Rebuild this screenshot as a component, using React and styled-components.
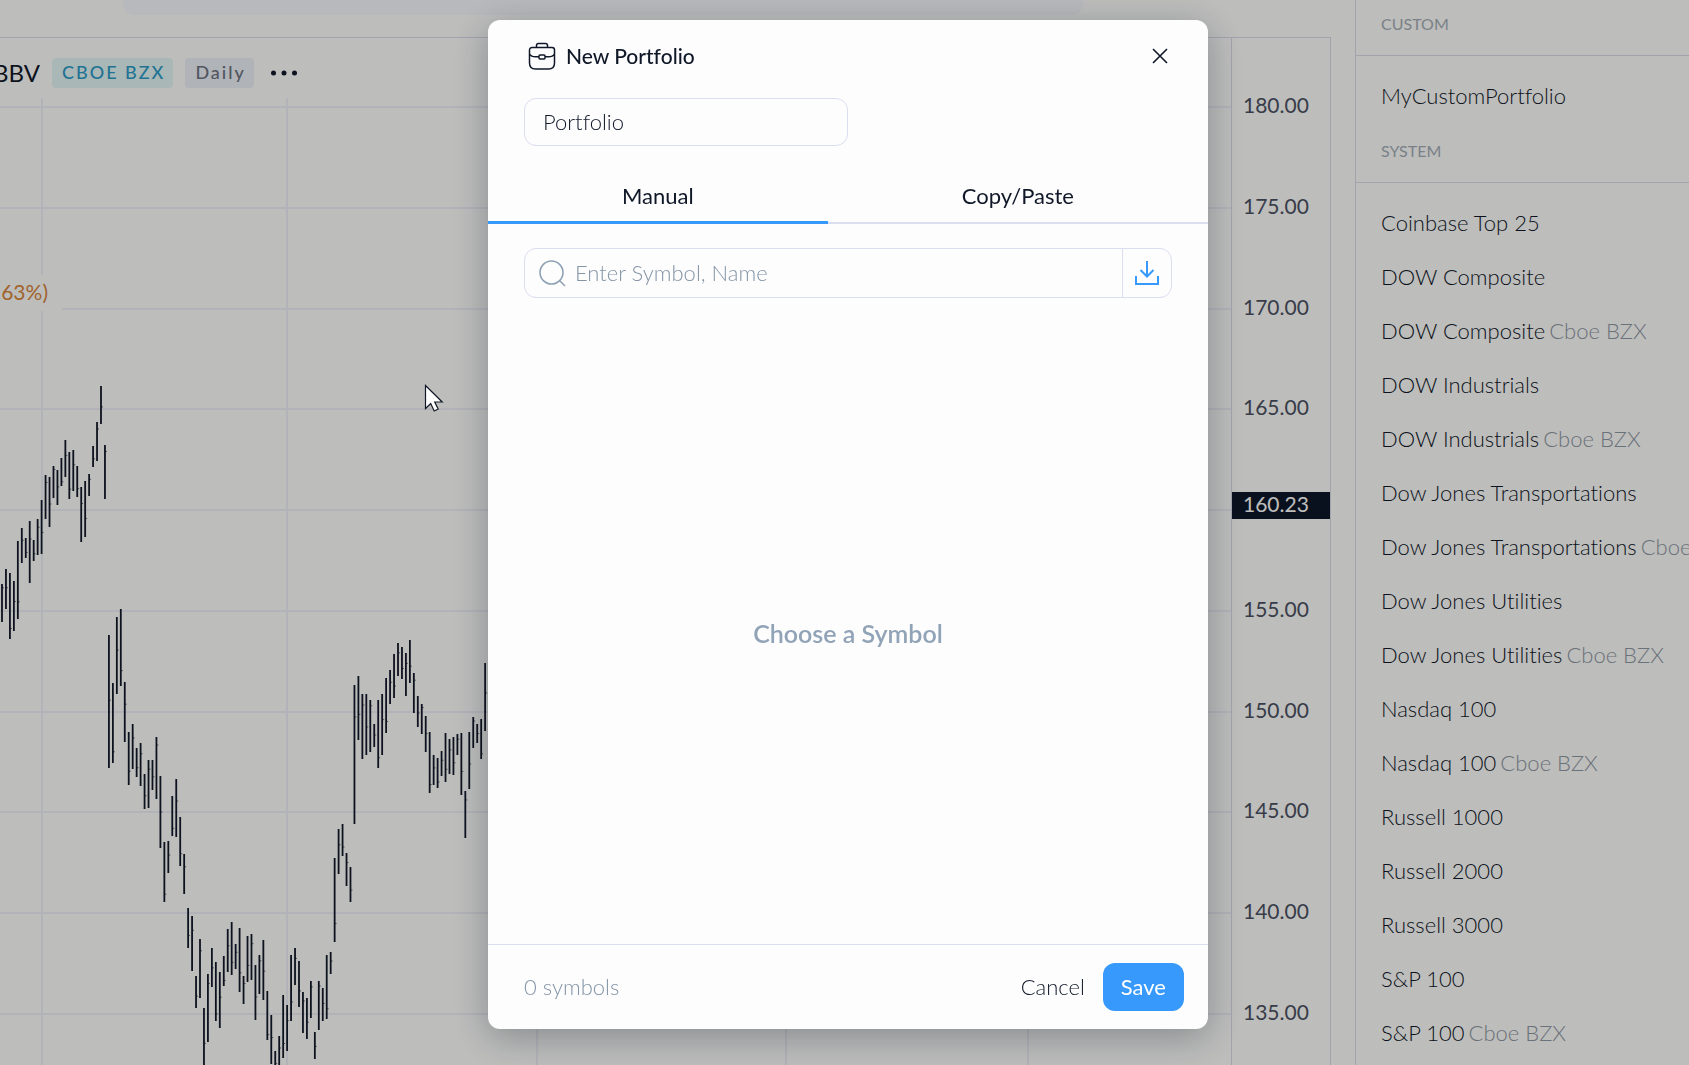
import React from 'react'
import styled, { createGlobalStyle, css } from 'styled-components'

const color = {
  ink: '#101828',
  muted: '#a3acb5',
  border: '#dbdeee',
  pageBorder: '#dadae9',
  accent: '#3699fb',
  page: '#fdfdfb',
}

const GlobalStyle = createGlobalStyle`
  *, *::before, *::after {
    box-sizing: border-box;
  }

  body {
    margin: 0;
    background: ${color.page};
    color: ${color.ink};
    font-family: Lato, 'Open Sans', sans-serif;
    font-size: 21px;
    font-weight: 400;
    font-variant-ligatures: none;
    line-height: 28px;
  }

  button, input {
    font: inherit;
    font-variant-ligatures: none;
    color: inherit;
  }

  h2, h3, p, ul {
    margin: 0;
    padding: 0;
    font: inherit;
    font-variant-ligatures: none;
  }
`

/* ---------- page behind the dialog ---------- */

const Page = styled.div`
  display: flex;
  gap: 24px;
  height: 100vh;
  overflow: hidden;
`

const Workspace = styled.main`
  display: flex;
  flex: 1;
  flex-direction: column;
  min-width: 0;
`

const TopBar = styled.header`
  display: flex;
  height: 37px;
  padding: 0 248px 22px 123px;
`

const TopSearch = styled.div`
  flex: 1;
  border-radius: 0 0 12px 12px;
  background: #f5f7fb;
`

const ChartPanel = styled.section`
  display: flex;
  flex: 1;
  min-height: 0;
  border-top: 1px solid ${color.pageBorder};
  border-right: 1px solid ${color.pageBorder};
`

const Plot = styled.div`
  display: grid;
  flex: 1;
  min-width: 0;
  overflow: hidden;

  > * {
    grid-area: 1 / 1;
  }
`

const PlotSvg = styled.svg`
  display: block;
  width: 100%;
  height: 100%;
`

const AxisSvg = styled.svg`
  display: block;
  flex: none;
  width: 99px;
  height: 100%;
  border-left: 1px solid ${color.pageBorder};
  fill: #4b5162;
`

const Legend = styled.div`
  display: flex;
  flex-direction: column;
  align-items: flex-start;
  gap: 177px;
  z-index: 1;
`

const LegendRow = styled.div`
  display: flex;
  align-items: center;
  gap: 12px;
  width: 100%;
  height: 60px;
  padding-top: 10px;
`

const Ticker = styled.span`
  display: flex;
  justify-content: flex-end;
  width: 40px;
  overflow: hidden;
  font-size: 24px;
`

const Tag = styled.button`
  height: 30px;
  padding: 0 8px 1px 10px;
  border: 0;
  border-radius: 4px;
  font-size: 18px;
  font-weight: 500;
  letter-spacing: 2px;
  line-height: 29px;
  white-space: nowrap;
  ${(props) =>
    props.$exchange
      ? css`
          background: #e2f5f3;
          color: #2d9ac6;
        `
      : css`
          background: #ebeff5;
          color: #6b7280;
        `}
`

const MoreButton = styled.button`
  display: flex;
  padding: 0 4px;
  border: 0;
  background: none;
`

const Change = styled.p`
  display: flex;
  justify-content: flex-end;
  width: 62px;
  height: 36px;
  padding-right: 14px;
  overflow: hidden;
  background: ${color.page};
  color: #d5853a;
  line-height: 34px;
`

const Sidebar = styled.aside`
  flex: none;
  width: 334px;
  overflow: hidden;
  border-left: 1px solid ${color.pageBorder};
`

const GroupTitle = styled.h3`
  display: flex;
  align-items: flex-end;
  height: ${(props) => (props.$first ? 56 : 60)}px;
  padding: 0 25px 21px;
  border-bottom: 1px solid ${color.pageBorder};
  color: ${color.muted};
  font-size: 16px;
  line-height: 20px;
  text-transform: uppercase;
`

const GroupList = styled.ul`
  padding-top: 13px;
  list-style: none;
`

const PortfolioRow = styled.li`
  display: flex;
  align-items: center;
  gap: 4px;
  height: 54px;
  padding: 0 0 1px 25px;
  font-size: 22px;
  font-weight: 300;
  white-space: nowrap;

  a {
    color: inherit;
    text-decoration: none;
  }
`

const Venue = styled.span`
  color: #8d97a2;
`

/* ---------- dialog ---------- */

const Backdrop = styled.div`
  position: fixed;
  inset: 0;
  z-index: 2;
  display: flex;
  justify-content: center;
  padding: 20px 8px 36px 15px;
  background: rgba(0, 0, 0, 0.25);
`

const Dialog = styled.form`
  display: flex;
  flex-direction: column;
  width: 720px;
  max-width: 100%;
  border-radius: 12px;
  background: #fdfdfe;
  box-shadow: 0 8px 36px rgba(16, 24, 40, 0.32);
`

const DialogHeader = styled.header`
  display: flex;
  align-items: center;
  gap: 10px;
  height: 72px;
  padding: 0 40px;
`

const Title = styled.h2`
  flex: 1;
  font-size: 21px;
  font-weight: 500;
`

const IconButton = styled.button`
  display: flex;
  align-items: center;
  justify-content: center;
  padding: 0;
  border: 0;
  background: none;
  cursor: pointer;
`

const NameRow = styled.div`
  padding: 6px 36px 22px;
`

const NameInput = styled.input`
  width: 324px;
  max-width: 100%;
  height: 48px;
  padding: 0 18px 2px;
  border: 1px solid ${color.border};
  border-radius: 12px;
  background: none;
  font-size: 22px;
  font-weight: 300;
`

const Tabs = styled.div`
  display: flex;
  height: 56px;
`

const Tab = styled.button`
  flex: 1 1 auto;
  padding: 0;
  border: 0;
  background: none;
  box-shadow: inset 0 ${(props) => (props.$active ? -3 : -2)}px
    ${(props) => (props.$active ? color.accent : color.border)};
  font-size: 22px;
  cursor: pointer;
`

const SearchBox = styled.div`
  display: flex;
  align-items: stretch;
  height: 50px;
  margin: 24px 36px 0;
  border: 1px solid ${color.border};
  border-radius: 12px;
`

const SearchLabel = styled.label`
  display: flex;
  flex: 1;
  align-items: center;
  gap: 9px;
  padding-left: 14px;
`

const SearchInput = styled.input`
  flex: 1;
  min-width: 0;
  padding: 0 0 1px;
  border: 0;
  outline: 0;
  background: none;
  font-size: 22px;
  font-weight: 300;

  &::placeholder {
    color: #8495a6;
    opacity: 1;
  }
`

const ImportButton = styled(IconButton)`
  width: 49px;
  border-left: 1px solid ${color.border};
`

const EmptyState = styled.p`
  display: flex;
  flex: 1;
  align-items: center;
  justify-content: center;
  padding-top: 24px;
  color: #91a3b6;
  font-size: 25px;
  font-weight: 600;
`

const DialogFooter = styled.footer`
  display: flex;
  align-items: center;
  height: 85px;
  padding: 0 24px 0 36px;
  border-top: 1px solid ${color.border};
`

const Count = styled.span`
  flex: 1;
  color: #8495a6;
  font-size: 22px;
  font-weight: 300;
`

const Button = styled.button`
  height: 48px;
  padding: 0 18px 1px;
  border: 0;
  border-radius: 12px;
  background: ${(props) => (props.$primary ? color.accent : 'transparent')};
  color: ${(props) => (props.$primary ? '#fff' : color.ink)};
  font-size: 22px;
  font-weight: ${(props) => (props.$primary ? 400 : 300)};
  cursor: pointer;
`

const Pointer = styled.svg`
  position: fixed;
  top: 384px;
  left: 424px;
  z-index: 3;
`

/* ---------- data ---------- */

// [top, bottom] of each daily bar, left to right
const bars = [
  [584, 622], [569, 609], [573, 639], [581, 631], [541, 619], [528, 563],
  [538, 558], [521, 583], [540, 561], [519, 555], [500, 554], [475, 519],
  [477, 527], [466, 498], [470, 505], [458, 486], [440, 477], [452, 499],
  [450, 491], [466, 497], [487, 542], [481, 537], [474, 496], [446, 467],
  [422, 461], [386, 424], [445, 499], [635, 768], [683, 763], [617, 694],
  [609, 686], [682, 742], [732, 785], [724, 769], [748, 777], [743, 786],
  [774, 809], [760, 808], [760, 790], [737, 799], [776, 848], [842, 902],
  [841, 873], [796, 836], [779, 837], [817, 866], [854, 894], [908, 948],
  [916, 971], [976, 1008], [939, 998], [1008, 1070], [974, 1042], [948, 987],
  [962, 1021], [972, 1028], [956, 986], [929, 972], [922, 975], [944, 969],
  [928, 992], [976, 1004], [936, 982], [934, 980], [965, 1020], [955, 994],
  [940, 1000], [991, 1040], [1015, 1064], [1051, 1066], [1036, 1066],
  [995, 1058], [1005, 1051], [955, 1021], [948, 985], [961, 1007],
  [992, 1033], [998, 1039], [981, 1018], [1032, 1059], [981, 1030],
  [988, 1021], [955, 1019], [952, 974], [858, 942], [829, 874], [824, 856],
  [853, 886], [867, 902], [685, 824], [676, 740], [694, 759], [694, 755],
  [700, 752], [724, 747], [700, 768], [694, 755], [678, 733], [670, 704],
  [654, 698], [643, 676], [647, 679], [653, 696], [640, 683], [673, 713],
  [696, 727], [704, 734], [716, 752], [732, 793], [755, 785], [758, 788],
  [751, 776], [733, 782], [739, 774], [737, 775], [734, 755], [733, 795],
  [791, 838], [732, 789], [717, 748], [724, 743], [719, 759], [663, 731],
]

const BAR_STEP = 3.96
const CHART_TOP = 38
const prices = [180, 175, 170, 165, 160, 155, 150, 145, 140, 135]
const priceY = (price) => Math.round(107 + (180 - price) * 20.15) - CHART_TOP
const dateLines = [42, 287, 537, 786, 1028]
const lastPrice = 160.23

const custom = [{ name: 'MyCustomPortfolio' }]

const system = [
  { name: 'Coinbase Top 25' },
  { name: 'DOW Composite' },
  { name: 'DOW Composite', venue: 'Cboe BZX' },
  { name: 'DOW Industrials' },
  { name: 'DOW Industrials', venue: 'Cboe BZX' },
  { name: 'Dow Jones Transportations' },
  { name: 'Dow Jones Transportations', venue: 'Cboe BZX' },
  { name: 'Dow Jones Utilities' },
  { name: 'Dow Jones Utilities', venue: 'Cboe BZX' },
  { name: 'Nasdaq 100' },
  { name: 'Nasdaq 100', venue: 'Cboe BZX' },
  { name: 'Russell 1000' },
  { name: 'Russell 2000' },
  { name: 'Russell 3000' },
  { name: 'S&P 100' },
  { name: 'S&P 100', venue: 'Cboe BZX' },
]

/* ---------- icons ---------- */

const BriefcaseIcon = () => (
  <svg width="28" height="28" viewBox="0 0 28 28" fill="none" stroke={color.ink} strokeWidth="1.5">
    <path d="M8.500 5.500V3.500a2 2 0 0 1 2-2h7a2 2 0 0 1 2 2v2" />
    <path d="M4 5.500h20a2.500 2.500 0 0 1 2.500 2.500V21c0 4-2 6-6 6h-13c-4 0-6-2-6-6V8A2.500 2.500 0 0 1 4 5.500z" />
    <path d="M1.500 12c1 1.800 3 2.800 6 2.800h3.500M26.500 12c-1 1.800-3 2.800-6 2.800H17" />
    <rect x="11" y="13" width="6" height="4" rx="1" />
  </svg>
)

const CloseIcon = () => (
  <svg width="16" height="16" viewBox="0 0 16 16" fill="none" stroke={color.ink} strokeWidth="1.6">
    <path d="M1 1l14 14M15 1L1 15" />
  </svg>
)

const SearchIcon = () => (
  <svg width="27" height="27" viewBox="0 0 27 27" fill="none" stroke="#8fa2b5" strokeWidth="1.6">
    <circle cx="12.500" cy="12.500" r="11.500" />
    <path d="M20.500 20.500l5.500 5.500" />
  </svg>
)

const DownloadIcon = () => (
  <svg width="26" height="26" viewBox="0 0 26 26" fill="none" stroke={color.accent} strokeWidth="2">
    <path d="M13 1v15M6.500 10l6.500 6.500 6.500-6.500M2 16v8h22v-8" />
  </svg>
)

/* ---------- parts ---------- */

const PriceChart = () => (
  <PlotSvg role="img" aria-label="Daily price chart">
    <g stroke="#eeeff6" strokeWidth="2">
      {prices.map((price) => (
        <line key={price} x1="0" x2="100%" y1={priceY(price)} y2={priceY(price)} />
      ))}
      {dateLines.map((x) => (
        <line key={x} x1={x} x2={x} y1="60" y2="100%" />
      ))}
    </g>
    {bars.map(([top, bottom], i) => {
      const x = 2 + i * BAR_STEP
      const close = top + (bottom - top) * (((i * 37) % 80) / 100 + 0.1)
      return (
        <g key={i} stroke="#101828" transform={`translate(0 ${-CHART_TOP})`}>
          <line x1={x} x2={x} y1={top} y2={bottom} strokeWidth="1.800" />
          <line x1={x} x2={x + 2} y1={close} y2={close} strokeWidth="1" opacity="0.6" />
        </g>
      )
    })}
  </PlotSvg>
)

const PriceAxis = () => (
  <AxisSvg role="img" aria-label="Price axis">
    {prices
      .filter((price) => price !== 160)
      .map((price) => (
        <text key={price} x="11" y={priceY(price) + 6}>
          {price.toFixed(2)}
        </text>
      ))}
    <rect x="0" y="454" width="99" height="27" fill="#0e1728" />
    <text x="11" y="474" fill="#fdfdfb">
      {lastPrice}
    </text>
  </AxisSvg>
)

const PortfolioGroup = ({ title, items, first }) => (
  <section>
    <GroupTitle $first={first}>{title}</GroupTitle>
    <GroupList>
      {items.map(({ name, venue }) => (
        <PortfolioRow key={name + venue}>
          <a href="#portfolio">{name}</a>
          {venue && <Venue>{venue}</Venue>}
        </PortfolioRow>
      ))}
    </GroupList>
  </section>
)

const NewPortfolioDialog = () => (
  <Backdrop>
    <Dialog role="dialog" aria-labelledby="dialog-title" onSubmit={(e) => e.preventDefault()}>
      <DialogHeader>
        <BriefcaseIcon />
        <Title id="dialog-title">New Portfolio</Title>
        <IconButton type="button" aria-label="Close">
          <CloseIcon />
        </IconButton>
      </DialogHeader>
      <NameRow>
        <NameInput aria-label="Portfolio name" defaultValue="Portfolio" />
      </NameRow>
      <Tabs role="tablist">
        <Tab type="button" role="tab" aria-selected="true" $active>
          Manual
        </Tab>
        <Tab type="button" role="tab" aria-selected="false">
          Copy/Paste
        </Tab>
      </Tabs>
      <SearchBox>
        <SearchLabel>
          <SearchIcon />
          <SearchInput aria-label="Symbol search" placeholder="Enter Symbol, Name" />
        </SearchLabel>
        <ImportButton type="button" aria-label="Import symbols">
          <DownloadIcon />
        </ImportButton>
      </SearchBox>
      <EmptyState>Choose a Symbol</EmptyState>
      <DialogFooter>
        <Count>0 symbols</Count>
        <Button type="button">Cancel</Button>
        <Button type="submit" $primary>
          Save
        </Button>
      </DialogFooter>
    </Dialog>
  </Backdrop>
)

export default function App() {
  return (
    <>
      <GlobalStyle />
      <Page>
        <Workspace>
          <TopBar>
            <TopSearch />
          </TopBar>
          <ChartPanel>
            <Plot>
              <PriceChart />
              <Legend>
                <LegendRow>
                  <Ticker>BBV</Ticker>
                  <Tag $exchange>CBOE BZX</Tag>
                  <Tag>Daily</Tag>
                  <MoreButton aria-label="More">
                    <svg width="28" height="6" viewBox="0 0 28 6" fill="#101828">
                      <circle cx="3.500" cy="3" r="2.500" />
                      <circle cx="14" cy="3" r="2.500" />
                      <circle cx="24.500" cy="3" r="2.500" />
                    </svg>
                  </MoreButton>
                </LegendRow>
                <Change>.63%)</Change>
              </Legend>
            </Plot>
            <PriceAxis />
          </ChartPanel>
        </Workspace>
        <Sidebar>
          <PortfolioGroup title="Custom" items={custom} first />
          <PortfolioGroup title="System" items={system} />
        </Sidebar>
      </Page>
      <NewPortfolioDialog />
      <Pointer width="20" height="29" viewBox="0 0 20 29" fill="#fff" stroke="#101828" strokeWidth="1.200">
        <path d="M1.500 1.500v23l5.200-5 3.500 7.500 4-2-3.500-7h7.500z" />
      </Pointer>
    </>
  )
}
